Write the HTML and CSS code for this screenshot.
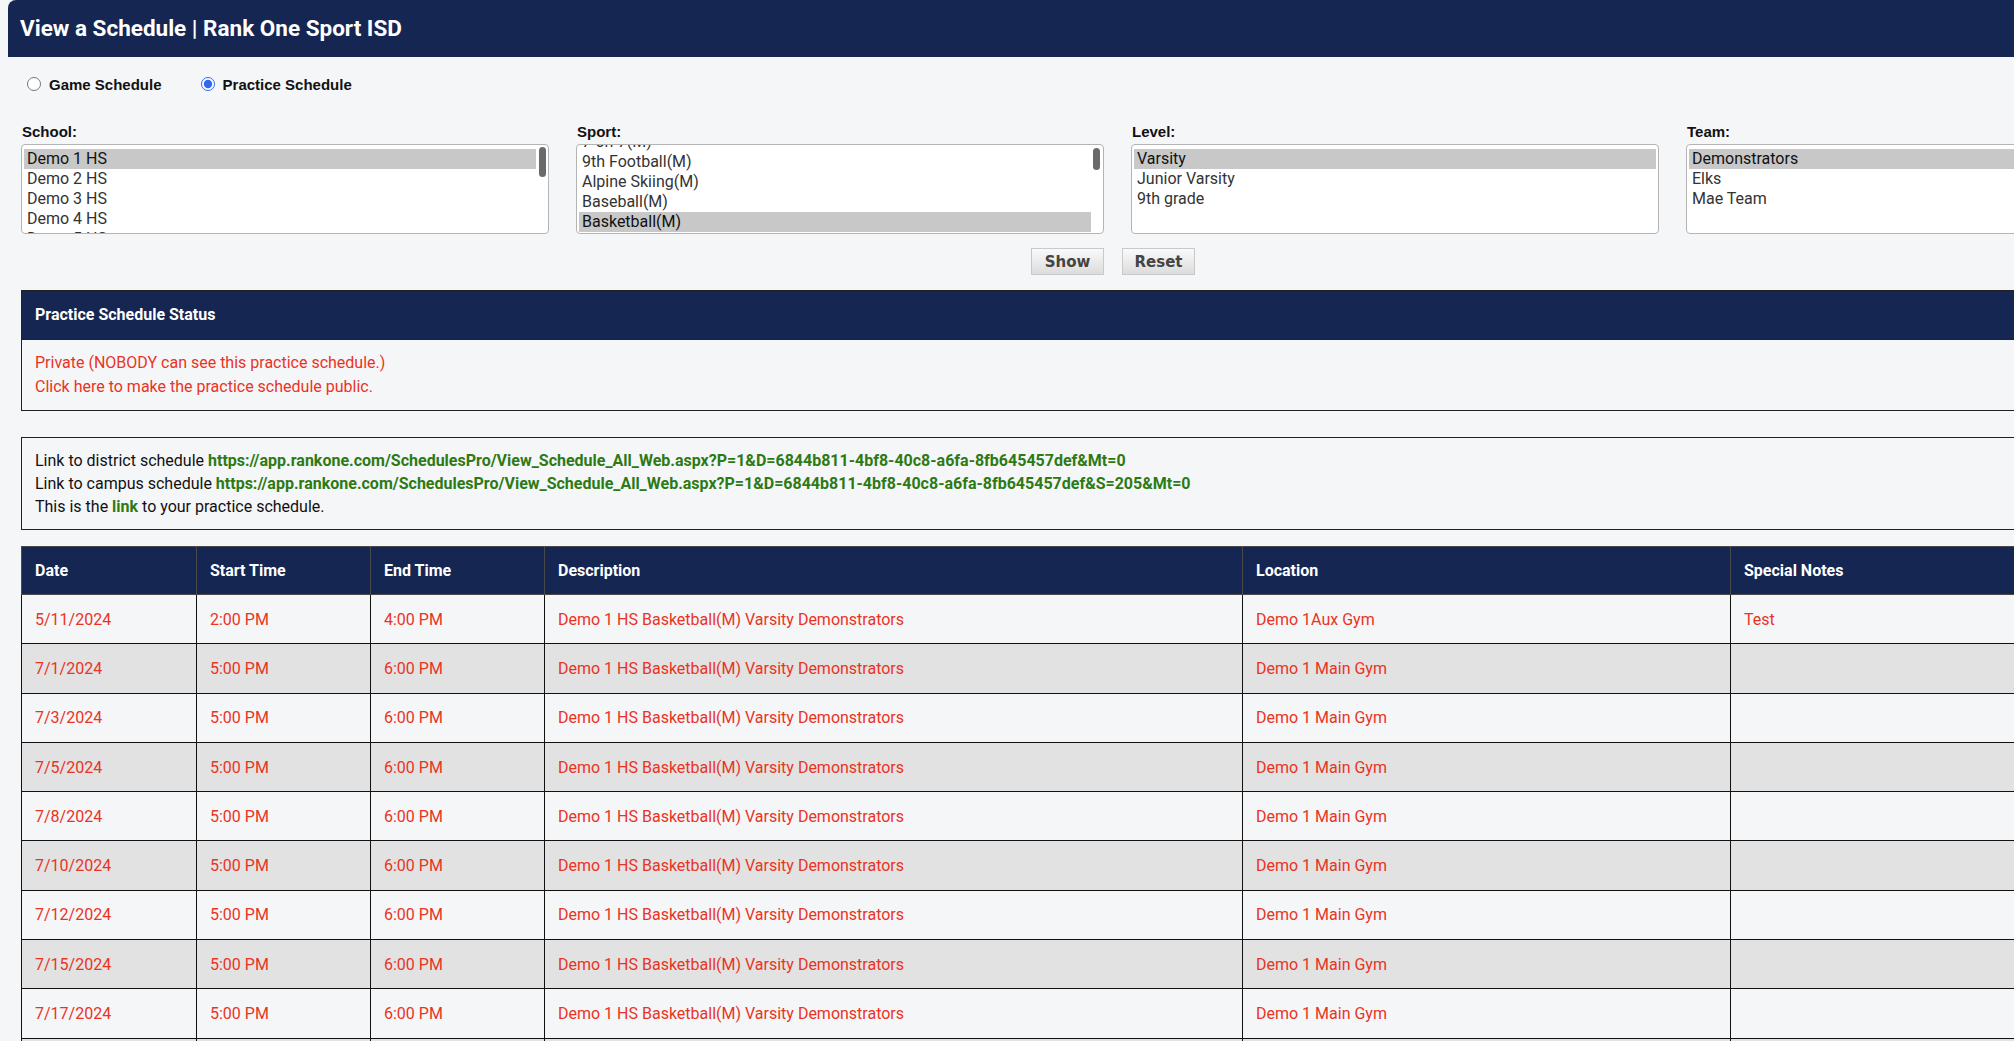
FILE: index.html
```html
<!DOCTYPE html>
<html>
  <head>
    <title>View a Schedule | Rank One Sport ISD</title>
    <link rel="stylesheet" href="styles.css">
  </head>
  <body>
    <div class="topbar">
      <h1>View a Schedule | Rank One Sport ISD</h1>
    </div>

    <div class="main">
      <div class="schedule-type">
        <label><input type="radio" name="schedType">Game Schedule</label>
        <label><input type="radio" name="schedType" checked>Practice Schedule</label>
      </div>

      <div class="filters">
        <div class="filter">
          <div class="filter-label">School:</div>
          <div class="listbox has-scroll">
            <ul>
              <li class="selected">Demo 1 HS</li>
              <li>Demo 2 HS</li>
              <li>Demo 3 HS</li>
              <li>Demo 4 HS</li>
              <li>Demo 5 HS</li>
            </ul>
            <span class="thumb"></span>
          </div>
        </div>
        <div class="filter">
          <div class="filter-label">Sport:</div>
          <div class="listbox has-scroll">
            <ul class="scrolled">
              <li>7-on-7(M)</li>
              <li>9th Football(M)</li>
              <li>Alpine Skiing(M)</li>
              <li>Baseball(M)</li>
              <li class="selected">Basketball(M)</li>
            </ul>
            <span class="thumb thumb-sport"></span>
          </div>
        </div>
        <div class="filter">
          <div class="filter-label">Level:</div>
          <div class="listbox">
            <ul>
              <li class="selected">Varsity</li>
              <li>Junior Varsity</li>
              <li>9th grade</li>
            </ul>
          </div>
        </div>
        <div class="filter">
          <div class="filter-label">Team:</div>
          <div class="listbox">
            <ul>
              <li class="selected">Demonstrators</li>
              <li>Elks</li>
              <li>Mae Team</li>
            </ul>
          </div>
        </div>
      </div>

      <div class="actions">
        <button>Show</button>
        <button>Reset</button>
      </div>

      <div class="panel">
        <div class="panel-head">Practice Schedule Status</div>
        <div class="panel-body status-text">
          <div>Private (NOBODY can see this practice schedule.)</div>
          <div><a href="#">Click here to make the practice schedule public.</a></div>
        </div>
      </div>

      <div class="panel links">
        <div>Link to district schedule <a href="#">https://app.rankone.com/SchedulesPro/View_Schedule_All_Web.aspx?P=1&amp;D=6844b811-4bf8-40c8-a6fa-8fb645457def&amp;Mt=0</a></div>
        <div>Link to campus schedule <a href="#">https://app.rankone.com/SchedulesPro/View_Schedule_All_Web.aspx?P=1&amp;D=6844b811-4bf8-40c8-a6fa-8fb645457def&amp;S=205&amp;Mt=0</a></div>
        <div>This is the <a href="#">link</a> to your practice schedule.</div>
      </div>

      <table class="schedule">
        <colgroup>
          <col style="width: 175px">
          <col style="width: 174px">
          <col style="width: 174px">
          <col style="width: 698px">
          <col style="width: 488px">
          <col style="width: 475px">
        </colgroup>
        <thead>
          <tr>
            <th>Date</th>
            <th>Start Time</th>
            <th>End Time</th>
            <th>Description</th>
            <th>Location</th>
            <th>Special Notes</th>
          </tr>
        </thead>
        <tbody>
          <tr><td>5/11/2024</td><td>2:00 PM</td><td>4:00 PM</td><td>Demo 1 HS Basketball(M) Varsity Demonstrators</td><td>Demo 1Aux Gym</td><td>Test</td></tr>
          <tr><td>7/1/2024</td><td>5:00 PM</td><td>6:00 PM</td><td>Demo 1 HS Basketball(M) Varsity Demonstrators</td><td>Demo 1 Main Gym</td><td></td></tr>
          <tr><td>7/3/2024</td><td>5:00 PM</td><td>6:00 PM</td><td>Demo 1 HS Basketball(M) Varsity Demonstrators</td><td>Demo 1 Main Gym</td><td></td></tr>
          <tr><td>7/5/2024</td><td>5:00 PM</td><td>6:00 PM</td><td>Demo 1 HS Basketball(M) Varsity Demonstrators</td><td>Demo 1 Main Gym</td><td></td></tr>
          <tr><td>7/8/2024</td><td>5:00 PM</td><td>6:00 PM</td><td>Demo 1 HS Basketball(M) Varsity Demonstrators</td><td>Demo 1 Main Gym</td><td></td></tr>
          <tr><td>7/10/2024</td><td>5:00 PM</td><td>6:00 PM</td><td>Demo 1 HS Basketball(M) Varsity Demonstrators</td><td>Demo 1 Main Gym</td><td></td></tr>
          <tr><td>7/12/2024</td><td>5:00 PM</td><td>6:00 PM</td><td>Demo 1 HS Basketball(M) Varsity Demonstrators</td><td>Demo 1 Main Gym</td><td></td></tr>
          <tr><td>7/15/2024</td><td>5:00 PM</td><td>6:00 PM</td><td>Demo 1 HS Basketball(M) Varsity Demonstrators</td><td>Demo 1 Main Gym</td><td></td></tr>
          <tr><td>7/17/2024</td><td>5:00 PM</td><td>6:00 PM</td><td>Demo 1 HS Basketball(M) Varsity Demonstrators</td><td>Demo 1 Main Gym</td><td></td></tr>
          <tr><td>7/19/2024</td><td>5:00 PM</td><td>6:00 PM</td><td>Demo 1 HS Basketball(M) Varsity Demonstrators</td><td>Demo 1 Main Gym</td><td></td></tr>
          <tr><td>7/22/2024</td><td>5:00 PM</td><td>6:00 PM</td><td>Demo 1 HS Basketball(M) Varsity Demonstrators</td><td>Demo 1 Main Gym</td><td></td></tr>
        </tbody>
      </table>
    </div>
  </body>
</html>
```

FILE: styles.css
```css
body {
  margin: 0;
  background-color: #f5f6f8;
  font-family: Roboto, "Liberation Sans", Arial, sans-serif;
  font-size: 16px;
  color: #111;
  overflow: hidden;
}

a {
  text-decoration: none;
}

.topbar {
  margin-left: 8px;
  height: 57px;
  background-color: #152652;
  border-top-left-radius: 8px;
}

.topbar h1 {
  margin: 0;
  padding-left: 12px;
  line-height: 57px;
  font-size: 22.5px;
  font-weight: bold;
  color: #fff;
}

.main {
  width: 2184px;
  padding-left: 21px;
}

/* game / practice toggle */
.schedule-type {
  display: flex;
  align-items: center;
  gap: 33px;
  height: 20px;
  padding-top: 17px;
  font-family: "Liberation Sans", Arial, sans-serif;
  font-size: 15px;
  font-weight: bold;
}

.schedule-type label {
  display: flex;
  align-items: center;
}

.schedule-type input {
  width: 14px;
  height: 14px;
  margin: 0 8px 0 6px;
  accent-color: #2f66f2;
}

/* filter listboxes */
.filters {
  display: grid;
  grid-template-columns: repeat(4, 528px);
  gap: 27px;
  margin-top: 29px;
}

.filter-label {
  font-family: "Liberation Sans", Arial, sans-serif;
  font-size: 15px;
  font-weight: bold;
  line-height: 18px;
  margin-bottom: 3px;
  padding-left: 1px;
}

.listbox {
  position: relative;
  height: 88px;
  background-color: #fff;
  border: 1px solid #b4b4b4;
  border-radius: 4px;
  overflow: hidden;
}

.listbox ul {
  list-style: none;
  margin: 0;
  padding: 4px 2px 0;
}

.listbox.has-scroll ul {
  padding-right: 12px;
}

.listbox ul.scrolled {
  padding-top: 0;
  margin-top: -13px;
}

.listbox li {
  padding: 0 3px;
  line-height: 20px;
  color: #333;
}

.listbox li.selected {
  background-color: #c8c8c8;
  color: #111;
}

.thumb {
  position: absolute;
  top: 2px;
  right: 2px;
  width: 7px;
  height: 30px;
  border-radius: 4px;
  background-color: #6a6a6a;
}

.thumb-sport {
  top: 3px;
  right: 3px;
  height: 22px;
}

.actions {
  display: flex;
  justify-content: center;
  gap: 18px;
  margin-top: 14px;
}

.actions button {
  width: 73px;
  height: 27px;
  padding: 0;
  border: 1px solid #c9c9c9;
  background: linear-gradient(#fafafa, #dcdcdc);
  font-family: "DejaVu Sans", Verdana, sans-serif;
  font-size: 15px;
  font-weight: bold;
  color: #444;
}

/* status and link boxes */
.panel {
  margin-top: 15px;
  border: 1px solid #222;
}

.panel-head {
  height: 48px;
  line-height: 48px;
  padding-left: 13px;
  background-color: #152652;
  border-bottom: 1px solid #222;
  font-weight: bold;
  color: #fff;
}

.panel-body {
  padding: 11px 13px;
  line-height: 24px;
}

.status-text,
.status-text a {
  color: #e9341f;
}

.links {
  margin-top: 26px;
  padding: 11px 13px;
  line-height: 23px;
}

.links a {
  color: #2d7a14;
  font-weight: bold;
}

/* schedule grid */
.schedule {
  margin-top: 16px;
  width: 2184px;
  table-layout: fixed;
  border-collapse: collapse;
  border-left: 1px solid #111;
}

.schedule th {
  height: 47px;
  padding: 0 13px;
  text-align: left;
  background-color: #152652;
  border: 1px solid #4a4a4a;
  color: #fff;
}

.schedule td {
  height: 48.3px;
  padding: 0 13px;
  border: 1px solid #111;
  color: #e9341f;
}

.schedule tbody tr:nth-child(even) td {
  background-color: #e2e2e2;
}
```
